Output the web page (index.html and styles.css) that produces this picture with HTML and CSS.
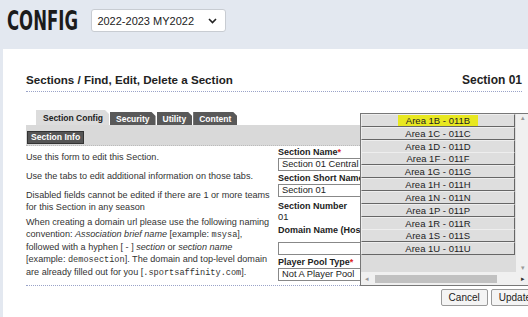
FILE: index.html
```html
<!DOCTYPE html>
<html lang="en">
<head>
    <meta charset="UTF-8">
    <title>Config - Sections</title>
    <link rel="stylesheet" href="styles.css">
</head>
<body>
    <div class="topbar">
        <span class="brand">CONFIG</span>
        <div class="season">
            <span>2022-2023 MY2022</span>
            <svg width="9" height="6" viewBox="0 0 9 6"><path d="M1 1l3.5 3.5L8 1" fill="none" stroke="#222" stroke-width="1.6"/></svg>
        </div>
    </div>

    <div class="panel">
        <div class="title-row">
            <h1>Sections / Find, Edit, Delete a Section</h1>
            <span class="current">Section 01</span>
        </div>

        <div class="tabs">
            <span class="tab active">Section Config</span>
            <span class="tab">Security</span>
            <span class="tab">Utility</span>
            <span class="tab">Content</span>
        </div>
        <div class="subtabs">
            <span class="subtab">Section Info</span>
        </div>

        <div class="content">
            <div class="help">
                <p>Use this form to edit this Section.</p>
                <p>Use the tabs to edit additional information on those tabs.</p>
                <p>Disabled fields cannot be edited if there are 1 or more teams<br>for this Section in any season</p>
                <p class="last">When creating a domain url please use the following naming<br>convention: <i>Association brief name</i> [example: <code>msysa</code>],<br>followed with a hyphen [ - ] <i>section</i> or <i>section name</i><br>[example: <code>demosection</code>]. The domain and top-level domain<br>are already filled out for you [<code>.sportsaffinity.com</code>].</p>
            </div>
            <div class="form">
                <label>Section Name<span class="req">*</span></label>
                <div class="field">Section 01 Central Section</div>
                <label>Section Short Name</label>
                <div class="field">Section 01</div>
                <label class="spaced">Section Number</label>
                <div class="value">01</div>
                <label>Domain Name (Host Name)</label>
                <div class="field empty"></div>
                <label>Player Pool Type<span class="req">*</span></label>
                <div class="field">Not A Player Pool</div>
            </div>
        </div>

        <div class="actions">
            <button>Cancel</button>
            <button>Update</button>
        </div>

        <div class="dropdown">
            <div class="list">
                <div class="opt"><span class="hl">Area 1B - 011B</span></div>
                <div class="opt">Area 1C - 011C</div>
                <div class="opt">Area 1D - 011D</div>
                <div class="opt">Area 1F - 011F</div>
                <div class="opt">Area 1G - 011G</div>
                <div class="opt">Area 1H - 011H</div>
                <div class="opt">Area 1N - 011N</div>
                <div class="opt">Area 1P - 011P</div>
                <div class="opt">Area 1R - 011R</div>
                <div class="opt">Area 1S - 011S</div>
                <div class="opt">Area 1U - 011U</div>
            </div>
            <div class="vscroll">
                <span class="arrow">&#9652;</span>
                <span class="arrow">&#9662;</span>
            </div>
            <div class="hscroll">
                <span class="arrow">&#9666;</span>
                <span class="thumb"></span>
                <span class="arrow dark">&#9656;</span>
            </div>
        </div>
    </div>
</body>
</html>
```

FILE: styles.css
```css
body {
    margin: 0;
    background-color: #e3e8f0;
    font-family: 'Liberation Sans', Arial, sans-serif;
    color: #222;
    overflow: hidden;
}

.topbar {
    display: flex;
    align-items: center;
    gap: 13px;
    height: 49px;
    padding-left: 7px;
    padding-bottom: 8px;
    box-sizing: border-box;
}

.brand {
    font-family: 'DejaVu Sans Condensed', sans-serif;
    font-weight: bold;
    font-size: 27px;
    color: #1b1b1b;
    transform: scaleX(0.68);
    transform-origin: left center;
    margin-right: -33px;
}

.season {
    display: flex;
    align-items: center;
    justify-content: space-between;
    width: 120px;
    height: 21px;
    padding: 0 8px 0 5px;
    background-color: white;
    border: 1px solid #c8ccd2;
    border-radius: 3px;
    font-size: 11px;
}

.panel {
    position: relative;
    margin-left: 3px;
    background-color: white;
    padding: 24px 6px 0 23px;
    height: 268px;
}

.title-row {
    display: flex;
    justify-content: space-between;
    align-items: baseline;
    padding-bottom: 4px;
    border-bottom: 1px dotted #9aa3c8;
}

h1 {
    margin: 0;
    font-size: 11.6px;
    font-weight: bold;
}

.current {
    font-size: 12px;
    font-weight: bold;
}

.tabs {
    display: flex;
    margin-top: 18px;
    padding-left: 10px;
    align-items: flex-end;
    gap: 1px;
}

.tab {
    font-size: 8.5px;
    font-weight: bold;
    line-height: 10px;
    color: white;
    background-color: #595959;
    padding: 2px 6px 1px 6px;
    clip-path: polygon(0 0, calc(100% - 4px) 0, 100% 4px, 100% 100%, 0 100%);
}

.tab.active {
    color: #222;
    background-color: #dcdcdc;
    padding: 3px 6px 2px 7px;
}

.subtabs {
    background-color: #d9d9d9;
    padding: 1px;
    border-bottom: 1px dotted #bbb;
}

.subtab {
    display: inline-block;
    font-size: 8.6px;
    font-weight: bold;
    line-height: 11px;
    color: white;
    background-color: #555;
    border: 1px solid #333;
    padding: 0 3px;
}

.content {
    display: flex;
    gap: 8px;
    border-bottom: 1px dotted #9aa3c8;
    padding-bottom: 3px;
}

.help {
    width: 244px;
    font-size: 9.1px;
    line-height: 12px;
    color: #333;
    white-space: nowrap;
}

.help p {
    margin: 7px 0 0 0;
}

.help p:first-child {
    margin-top: 5px;
}

.help p.last {
    margin-top: 3px;
}

.help code {
    font-family: 'Liberation Mono', monospace;
    font-size: 8.6px;
}

.form {
    display: flex;
    flex-direction: column;
    padding-top: 0;
    width: 100px;
}

.form label {
    font-size: 9px;
    font-weight: bold;
    white-space: nowrap;
    line-height: 11px;
    margin-top: 1px;
}

.form label.spaced {
    margin-top: 3px;
}

.req {
    color: #d22;
}

.field {
    border: 1px solid #888;
    height: 11px;
    font-size: 9.3px;
    line-height: 11px;
    padding-left: 3px;
    white-space: nowrap;
    overflow: hidden;
    width: 120px;
    margin-bottom: 1px;
}

.field.empty {
    margin-top: 6px;
}

.value {
    font-size: 9.3px;
    line-height: 10px;
    margin-bottom: 2px;
}

.actions {
    display: flex;
    justify-content: flex-end;
    gap: 3px;
    margin-top: 3px;
    margin-right: -17px;
}

button {
    font-family: 'Liberation Sans', Arial, sans-serif;
    font-size: 10px;
    color: #222;
    background-color: #f4f4f4;
    border: 1px solid #999;
    border-radius: 2px;
    padding: 1px 7px;
    height: 17px;
}

.dropdown {
    position: absolute;
    top: 64px;
    left: 357px;
    width: 168px;
    height: 171px;
    background-color: #dcdcdc;
    border: 1px solid #777;
}

.list {
    width: 154px;
}

.opt {
    height: 11px;
    font-size: 9.5px;
    line-height: 11px;
    text-align: center;
    color: #222;
    border: 1px solid #666;
    border-top-color: #eee;
    border-left-color: #eee;
    background-color: #dedede;
    margin-bottom: -0.2px;
}

.hl {
    background-color: #e8e820;
    padding: 0 8px;
    display: inline-block;
}

.vscroll {
    position: absolute;
    top: 0;
    right: 0;
    width: 13px;
    bottom: 13px;
    display: flex;
    flex-direction: column;
    justify-content: space-between;
    align-items: center;
    background-color: #f0f0f0;
}

.hscroll {
    position: absolute;
    left: 0;
    right: 0;
    bottom: 0;
    height: 13px;
    display: flex;
    align-items: center;
    background-color: #f0f0f0;
}

.hscroll .thumb {
    flex: 1;
    height: 8px;
    background-color: #c1c1c1;
    margin: 0 20px 0 2px;
}

.arrow {
    font-size: 7px;
    color: #999;
    width: 12px;
    text-align: center;
}

.arrow.dark {
    color: #333;
}
```
